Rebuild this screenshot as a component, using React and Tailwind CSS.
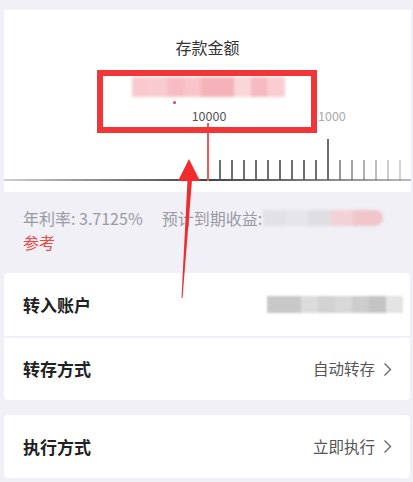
import React from "react";

const ticks = [220, 232, 244, 256, 268, 280, 292, 304, 316, 328, 340, 352, 364, 376, 388, 400];

function Chevron() {
  return (
    <svg width="9" height="15" viewBox="0 0 9 15" className="ml-[8px]">
      <path d="M1.5 1.5 L7.5 7.5 L1.5 13.5" fill="none" stroke="#666" strokeWidth="1.4" />
    </svg>
  );
}

function Row({ label, right, className }) {
  return (
    <div className={"flex items-center justify-between bg-white pl-[19px] pr-[18px] " + className}>
      <span className="text-[17px] font-bold text-[#222]">{label}</span>
      {right}
    </div>
  );
}

export default function App() {
  return (
    <div
      className="relative w-[413px] h-[482px] overflow-hidden bg-[#f0f0f6]"
      style={{ fontFamily: '"Noto Sans CJK SC", "Noto Sans", sans-serif' }}
    >
      <div className="pt-[10px] px-[4px] pr-[2px]">
        {/* amount card */}
        <div className="relative bg-white h-[182px]">
          <div className="pt-[25px] text-center text-[16px] text-[#333] leading-[24px]">存款金额</div>
          {/* blurred amount */}
          <div className="absolute left-[128px] top-[67px] flex h-[20px] blur-[1.5px]">
            <div className="w-[15px] bg-[#f9c9cd]" />
            <div className="w-[20px] bg-[#f8cbd0]" />
            <div className="w-[17px] bg-[#f6bcc2]" />
            <div className="w-[17px] bg-[#f9c4c9]" />
            <div className="w-[33px] bg-[#f5b2b8]" />
            <div className="w-[17px] bg-[#fbd6d9]" />
            <div className="w-[16px] bg-[#f6b9bf]" />
            <div className="w-[18px] bg-[#f9cdd1]" />
          </div>
          <div className="absolute left-[169px] top-[91px] w-[3px] h-[3px] rounded-full bg-[#e0404a]" />
          <div className="absolute left-[186px] top-[98px] w-[38px] text-center text-[12.5px] leading-[16px] text-[#555]">10000</div>
          <div className="absolute left-[314px] top-[98px] text-[12.5px] leading-[16px] text-[#aaa]">1000</div>
          {/* scale */}
          <div className="absolute left-0 right-0 top-[169px] h-[2px] bg-gradient-to-r from-[#d0d0d0] via-[#444] via-50% to-[#bbb]" />
          <div className="absolute left-[203px] top-[113px] w-[2px] h-[58px] bg-[#f25a5a]" />
          {ticks.map((x, i) => (
            <div
              key={x}
              className="absolute w-[2px] bg-[#555]"
              style={{
                left: x - 5,
                top: x === 328 ? 129 : 150,
                height: x === 328 ? 41 : 20,
                opacity: x <= 328 ? 0.85 : Math.max(0.25, 0.7 - (i - 9) * 0.08),
              }}
            />
          ))}
        </div>
      </div>

      {/* interest */}
      <div className="px-[23px] pt-[15px] text-[16px] leading-[22px]">
        <div className="flex text-[#9a9aa2]">
          <span>年利率: 3.7125%</span>
          <span className="ml-[19px]">预计到期收益:</span>
          <div className="ml-[1px] mt-[3px] flex h-[16px] w-[120px] blur-[1.5px]">
            <div className="flex-1 bg-[#e1e1e6]" />
            <div className="flex-1 bg-[#e6e6ea]" />
            <div className="flex-1 bg-[#dedee3]" />
            <div className="w-[22px] bg-[#f2d2d6]" />
            <div className="w-[30px] rounded-r-full bg-[#f0c6cb]" />
          </div>
        </div>
        <div className="mt-[2px] text-[#e94848]">参考</div>
      </div>

      {/* rows */}
      <div className="mt-[20px] pl-[4px] pr-[3px]">
        <Row
          label="转入账户"
          className="h-[63px] rounded-t-[4px]"
          right={
            <div className="flex h-[17px] w-[136px] -mr-[11px] blur-[1px]">
              <div className="w-[34px] bg-[#c8c8c8]" />
              <div className="w-[17px] bg-[#dcdcdc]" />
              <div className="w-[17px] bg-[#d2d2d2]" />
              <div className="w-[17px] bg-[#d8d8d8]" />
              <div className="w-[17px] bg-[#cdcdcd]" />
              <div className="w-[17px] bg-[#c4c4c4]" />
              <div className="w-[17px] bg-[#e4e4e4]" />
            </div>
          }
        />
        <div className="h-[2px] bg-[#f0f0f6]" />
        <Row
          label="转存方式"
          className="h-[62px] rounded-b-[4px]"
          right={
            <div className="flex items-center text-[15.5px] text-[#555]">
              自动转存<Chevron />
            </div>
          }
        />
        <div className="h-[15px]" />
        <Row
          label="执行方式"
          className="h-[63px] rounded-[4px]"
          right={
            <div className="flex items-center text-[15.5px] text-[#555]">
              立即执行<Chevron />
            </div>
          }
        />
      </div>

      {/* annotation: red box */}
      <div className="absolute left-[97px] top-[70px] w-[220px] h-[63px] border-[6px] border-[#f03636]" />
      {/* annotation: arrow */}
      <svg className="absolute left-0 top-0" width="413" height="482" viewBox="0 0 413 482">
        <polygon points="189,159 178,181 200,181" fill="#f02c2c" />
        <polygon points="187.5,180 192,180 182.5,298 181.5,298" fill="#f02c2c" />
      </svg>
    </div>
  );
}
